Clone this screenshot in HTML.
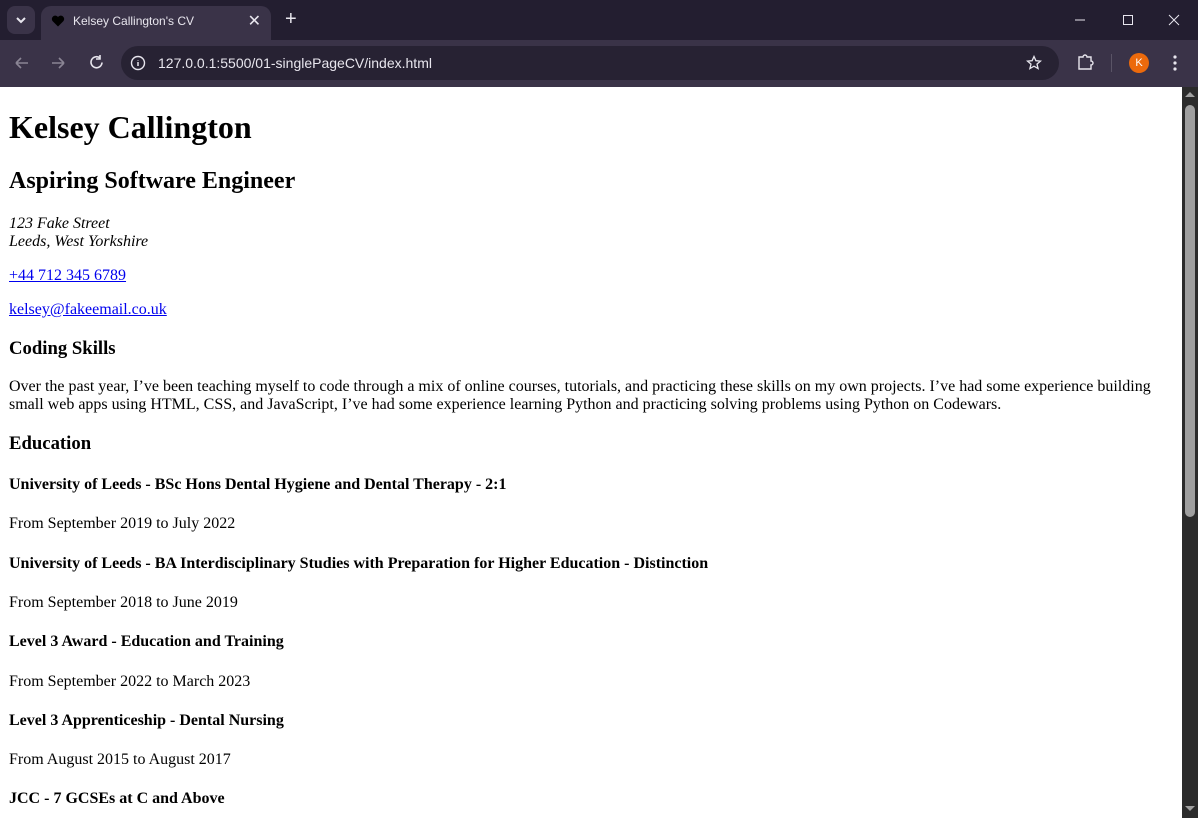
<!DOCTYPE html>
<html><head><meta charset="utf-8"><style>
*{box-sizing:border-box}
html,body{margin:0;padding:0;width:1198px;height:818px;overflow:hidden;background:#231e30;font-family:"Liberation Sans",sans-serif}
.titlebar{position:absolute;left:0;top:0;width:1198px;height:40px;background:#231e30}
.tabdd{position:absolute;left:7px;top:6px;width:28px;height:28px;border-radius:8px;background:#3a3348}
.tab{position:absolute;left:41px;top:6px;width:230px;height:34px;background:#3a3348;border-radius:10px 10px 0 0}
.tab .t{position:absolute;left:32px;top:8px;color:#e8e6ee;font-size:12px}
.tab .x{position:absolute;right:10px;top:5px;color:#e8e6ee;font-size:16px}
.plus{position:absolute;left:285px;top:8px;color:#e8e6ee;font-size:20px}
.toolbar{position:absolute;left:0;top:40px;width:1198px;height:47px;background:#3a3348}
.omni{position:absolute;left:121px;top:6px;width:938px;height:34px;border-radius:17px;background:#272233}
.omni .u{position:absolute;left:37px;top:9px;color:#e8e6ee;font-size:14px}
.page{position:absolute;left:1px;top:88px;width:1181px;height:730px;background:#fff;overflow:hidden;font-family:"Liberation Serif",serif;color:#000;font-size:16px}
.pagebg{position:absolute;left:0;top:87px;width:1182px;height:731px;background:#fff}
.page .in{margin:8px}
h1{font-size:32px;margin:21.44px 0}
h2{font-size:24px;margin:19.92px 0}
h3{font-size:18.72px;margin:18.72px 0}
h4{font-size:16px;margin:21.28px 0}
p{margin:16px 0}
a{color:#0000ee}
.sb{position:absolute;left:1182px;top:87px;width:16px;height:731px;background:#2b2b2b}
.thumb{position:absolute;left:3px;top:18px;width:10px;height:412px;border-radius:5px;background:#9f9f9f}
</style></head><body>
<div class="titlebar">
 <div class="tabdd"><svg width="28" height="28"><path d="M10 12l4 4 4-4" stroke="#e8e6ee" stroke-width="2" fill="none"/></svg></div>
 <div class="tab"><svg style="position:absolute;left:10px;top:8px" width="14" height="14" viewBox="0 0 14 14"><path d="M7 12.5L1.5 7A3 3 0 0 1 7 3a3 3 0 0 1 5.5 4z" fill="#000"/></svg><span class="t">Kelsey Callington's CV</span><span class="x">✕</span></div>
 <div class="plus">+</div>
 <svg style="position:absolute;left:1075px;top:12px" width="110" height="16"><path d="M0 8h10" stroke="#e8e6ee"/><rect x="48.5" y="3.5" width="9" height="9" stroke="#e8e6ee" fill="none"/><path d="M94 3l10 10M104 3l-10 10" stroke="#e8e6ee"/></svg>
</div>
<div class="toolbar">
 <svg style="position:absolute;left:12px;top:14px" width="100" height="18"><path d="M4 9h12M4 9l5-5M4 9l5 5" stroke="#8a8594" stroke-width="1.6" fill="none"/><path d="M40 9h12M52 9l-5-5M52 9l-5 5" stroke="#8a8594" stroke-width="1.6" fill="none"/><path d="M88 4a5.5 5.5 0 1 0 2 4.5M88 1v4h-4" stroke="#e8e6ee" stroke-width="1.6" fill="none"/></svg>
 <div class="omni"><svg style="position:absolute;left:9px;top:9px" width="16" height="16"><circle cx="8" cy="8" r="6.5" stroke="#e8e6ee" stroke-width="1.4" fill="none"/><path d="M8 7v4M8 5v.5" stroke="#e8e6ee" stroke-width="1.5"/></svg><span class="u">127.0.0.1:5500/01-singlePageCV/index.html</span>
 <svg style="position:absolute;left:905px;top:9px" width="16" height="16" viewBox="0 0 16 16"><path d="M8 1.5l1.9 4.2 4.6.4-3.5 3 1.1 4.5L8 11.2 3.9 13.6 5 9.1 1.5 6.1l4.6-.4z" stroke="#e8e6ee" stroke-width="1.3" fill="none"/></svg></div>
 <svg style="position:absolute;left:1077px;top:13px" width="18" height="18"><path d="M2 4h4a2 2 0 0 1 4 0h4v4a2 2 0 0 1 0 4v4H2z" stroke="#e8e6ee" stroke-width="1.4" fill="none"/></svg>
 <div style="position:absolute;left:1111px;top:14px;width:1px;height:18px;background:#5a5466"></div>
 <div style="position:absolute;left:1129px;top:13px;width:20px;height:20px;border-radius:50%;background:#ec6a0c;color:#fff;font-size:11px;text-align:center;line-height:20px">K</div>
 <svg style="position:absolute;left:1172px;top:14px" width="6" height="18"><circle cx="3" cy="3" r="1.6" fill="#e8e6ee"/><circle cx="3" cy="9" r="1.6" fill="#e8e6ee"/><circle cx="3" cy="15" r="1.6" fill="#e8e6ee"/></svg>
</div>
<div class="pagebg"></div>
<div class="page"><div class="in">
<h1>Kelsey Callington</h1>
<h2>Aspiring Software Engineer</h2>
<p><i>123 Fake Street<br>Leeds, West Yorkshire</i></p>
<p><a href="#">+44 712 345 6789</a></p>
<p><a href="#">kelsey@fakeemail.co.uk</a></p>
<h3>Coding Skills</h3>
<p>Over the past year, I’ve been teaching myself to code through a mix of online courses, tutorials, and practicing these skills on my own projects. I’ve had some experience building small web apps using HTML, CSS, and JavaScript, I’ve had some experience learning Python and practicing solving problems using Python on Codewars.</p>
<h3>Education</h3>
<h4>University of Leeds - BSc Hons Dental Hygiene and Dental Therapy - 2:1</h4>
<p>From September 2019 to July 2022</p>
<h4>University of Leeds - BA Interdisciplinary Studies with Preparation for Higher Education - Distinction</h4>
<p>From September 2018 to June 2019</p>
<h4>Level 3 Award - Education and Training</h4>
<p>From September 2022 to March 2023</p>
<h4>Level 3 Apprenticeship - Dental Nursing</h4>
<p>From August 2015 to August 2017</p>
<h4>JCC - 7 GCSEs at C and Above</h4>
<p>From September 2010 to June 2015</p>
</div></div>
<div class="sb"><svg style="position:absolute;left:3px;top:4px" width="10" height="8"><path d="M0 6l5-5 5 5z" fill="#a0a0a0"/></svg><div class="thumb"></div><svg style="position:absolute;left:3px;top:718px" width="10" height="8"><path d="M0 1l5 5 5-5z" fill="#a0a0a0"/></svg></div>
</body></html>
